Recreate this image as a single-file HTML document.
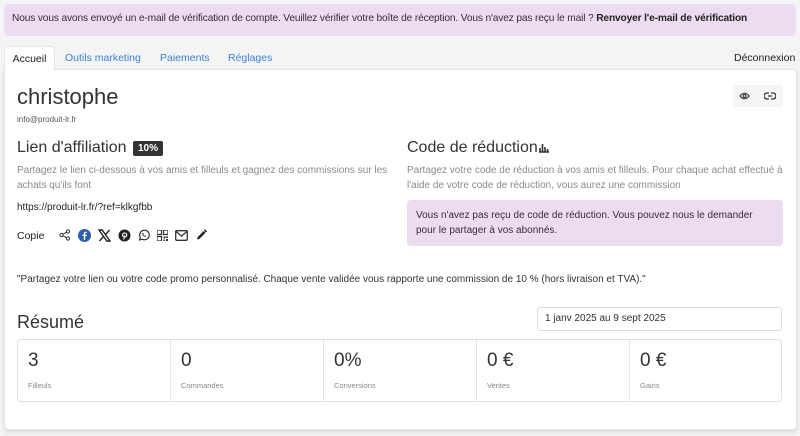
<!DOCTYPE html>
<html><head><meta charset="utf-8"><style>
*{box-sizing:border-box;margin:0;padding:0}
body{width:800px;height:436px;background:#f4f4f5;font-family:"Liberation Sans",sans-serif;color:#222;position:relative;overflow:hidden}
.a{position:absolute}
.banner{left:4px;top:4px;width:792px;height:32px;background:#ebdcef;border-radius:4px;font-size:10.2px;color:#3a2a40;padding:9px 8px;white-space:nowrap;letter-spacing:-0.15px}
.tabs{top:46px;left:4px;width:792px;height:24px;font-size:10.5px}
.tab{position:absolute;top:0;height:25px;padding-top:6px;color:#3b82d6}
.card{left:4px;top:69px;width:793px;height:361px;background:#fff;border:1px solid #e5e5e5;border-radius:0 4px 4px 4px;box-shadow:0 2px 4px rgba(0,0,0,.12)}
.muted{color:#8a8a8a;font-size:10px;line-height:15px}
.stat{position:absolute;top:0;height:62px;border-right:1px solid #e5e5e5;padding:10px}
.stat b{font-weight:normal;font-size:19px;color:#333;display:block}
.stat span{font-size:7.5px;color:#888;position:absolute;top:41px;left:10px}
svg{display:inline-block;vertical-align:middle}
</style></head><body>
<div class="a banner">Nous vous avons envoyé un e-mail de vérification de compte. Veuillez vérifier votre boîte de réception. Vous n'avez pas reçu le mail ? <b style="color:#222">Renvoyer l'e-mail de vérification</b></div>
<div class="a tabs">
<div class="tab" style="left:0;width:51px;background:#fff;border:1px solid #e5e5e5;border-bottom:none;border-radius:4px 4px 0 0;color:#222;text-align:center;z-index:2">Accueil</div>
<div class="tab" style="left:61px">Outils marketing</div>
<div class="tab" style="left:156px">Paiements</div>
<div class="tab" style="left:224px">Réglages</div>
<div class="tab" style="left:730px;color:#222">Déconnexion</div>
</div>
<div class="a card"></div>
<div class="a" style="left:17px;top:84px;font-size:22px;color:#333">christophe</div>
<div class="a" style="left:17px;top:115px;font-size:8px;color:#555">info@produit-lr.fr</div>
<div class="a" style="left:733px;top:85px;width:50px;height:22px;background:#f4f5f5;border-radius:3px"></div>
<svg class="a" style="left:739px;top:91px" width="11" height="10" viewBox="0 0 12 10"><path d="M1 5Q6-1 11 5Q6 11 1 5Z" fill="none" stroke="#333" stroke-width="1.2"/><circle cx="6" cy="5" r="1.6" fill="none" stroke="#333" stroke-width="1.2"/></svg>
<svg class="a" style="left:764px;top:92px" width="12" height="8" viewBox="0 0 12 8"><path d="M5 1H3a3 3 0 000 6h2M7 1h2a3 3 0 010 6H7M4 4h4" fill="none" stroke="#333" stroke-width="1.3"/></svg>

<div class="a" style="left:17px;top:139px;font-size:16px;color:#333">Lien d'affiliation</div>
<div class="a" style="left:133px;top:141px;background:#333;color:#fff;font-size:10px;font-weight:bold;padding:2px 5px;border-radius:2px">10%</div>
<div class="a muted" style="left:17px;top:163px;width:380px">Partagez le lien ci-dessous à vos amis et filleuls et gagnez des commissions sur les achats qu'ils font</div>
<div class="a" style="left:17px;top:202px;font-size:10px;color:#222">https://produit-lr.fr/?ref=klkgfbb</div>
<div class="a" style="left:17px;top:230px;font-size:10.5px">Copie</div>
<div class="a" style="left:59px;top:228px;height:14px;display:flex;gap:7px;align-items:center">
<svg width="12" height="12" viewBox="0 0 12 12"><circle cx="9" cy="2.5" r="1.6" fill="none" stroke="#333"/><circle cx="2.5" cy="6" r="1.6" fill="none" stroke="#333"/><circle cx="9" cy="9.5" r="1.6" fill="none" stroke="#333"/><path d="M4 5.2L7.6 3.2M4 6.8L7.6 8.8" stroke="#333"/></svg>
<svg width="13" height="13" viewBox="0 0 13 13"><circle cx="6.5" cy="6.5" r="6.5" fill="#2d5ea8"/><path d="M7.2 11V7h1.3l.2-1.4H7.2v-.9c0-.4.1-.7.7-.7h.8V2.8H7.6c-1.2 0-1.8.7-1.8 1.8v1H4.6V7h1.2v4z" fill="#fff"/></svg>
<svg width="13" height="13" viewBox="0 0 13 13"><path d="M1 1h3.2l7.8 11H8.8zM11.5 1L7.3 5.8M1.5 12l4.3-4.8" stroke="#222" stroke-width="1.4" fill="none"/></svg>
<svg width="13" height="13" viewBox="0 0 13 13"><circle cx="6.5" cy="6.5" r="6" fill="#222"/><path d="M5.7 10.5l1-4M5.5 7.6C4 7 4.2 4 6.7 4c2.3 0 2.6 2.8 1.2 3.7-.8.5-1.6 0-1.4-.7" stroke="#fff" stroke-width="1.1" fill="none"/></svg>
<svg width="12" height="12" viewBox="0 0 12 12"><path d="M1.5 11l.8-2.6A4.8 4.8 0 116 10.8a4.8 4.8 0 01-2-.5z" fill="none" stroke="#222" stroke-width="1.1"/><path d="M4 4.5c.3 1.8 1.6 3 3.5 3.4l.6-1-1-.5-.4.5c-.8-.4-1.2-.9-1.5-1.6l.5-.4-.5-1z" fill="#222"/></svg>
<svg width="11" height="11" viewBox="0 0 11 11"><path d="M0 0h4.5v4.5H0zM6.5 0H11v4.5H6.5zM0 6.5h4.5V11H0z" fill="none" stroke="#333" stroke-width="1.2"/><path d="M6.5 6.5h2v2h-2zM9 9h2v2H9zM9 6.5h2v1.5H9zM6.5 9.5h1.5V11H6.5z" fill="#333"/></svg>
<svg width="13" height="11" viewBox="0 0 13 11"><rect x=".7" y=".7" width="11.6" height="9.6" rx="1" fill="none" stroke="#333" stroke-width="1.3"/><path d="M1 1.5l5.5 4.5L12 1.5" fill="none" stroke="#333" stroke-width="1.3"/></svg>
<svg width="13" height="12" viewBox="0 0 12 12"><path d="M1.5 10.5l.6-2.4 6-6 1.8 1.8-6 6z" fill="#222"/><path d="M9 1l2 2" stroke="#222" stroke-width="1.6"/></svg>
</div>

<div class="a" style="left:407px;top:139px;font-size:16px;color:#333">Code de réduction <svg width="10" height="10" viewBox="0 0 10 10" style="vertical-align:-1px;margin-left:-3px"><path d="M0 9h10M1 9V5M3.5 9V1M6 9V4M8.5 9V6" stroke="#333" stroke-width="1.6"/></svg></div>
<div class="a muted" style="left:407px;top:163px;width:385px">Partagez votre code de réduction à vos amis et filleuls. Pour chaque achat effectué à l'aide de votre code de réduction, vous aurez une commission</div>
<div class="a" style="left:407px;top:200px;width:376px;height:46px;background:#ebdcef;border-radius:4px;padding:8px 9px;font-size:10px;line-height:15px;color:#3a2a40">Vous n'avez pas reçu de code de réduction. Vous pouvez nous le demander pour le partager à vos abonnés.</div>

<div class="a" style="left:17px;top:274px;font-size:10px;color:#333">"Partagez votre lien ou votre code promo personnalisé. Chaque vente validée vous rapporte une commission de 10 % (hors livraison et TVA)."</div>

<div class="a" style="left:17px;top:312px;font-size:18px;color:#333">Résumé</div>
<div class="a" style="left:537px;top:307px;width:245px;height:24px;border:1px solid #ddd;border-radius:3px;padding:5px 7px;font-size:10px;color:#333">1 janv 2025 au 9 sept 2025</div>
<div class="a" style="left:17px;top:339px;width:765px;height:63px;border:1px solid #e0e0e0;border-radius:4px">
<div class="stat" style="left:0;width:153px"><b>3</b><span>Filleuls</span></div>
<div class="stat" style="left:153px;width:153px"><b>0</b><span>Commandes</span></div>
<div class="stat" style="left:306px;width:153px"><b>0%</b><span>Conversions</span></div>
<div class="stat" style="left:459px;width:153px"><b>0 €</b><span>Ventes</span></div>
<div class="stat" style="left:612px;width:152px;border:none"><b>0 €</b><span>Gains</span></div>
</div>
</body></html>
